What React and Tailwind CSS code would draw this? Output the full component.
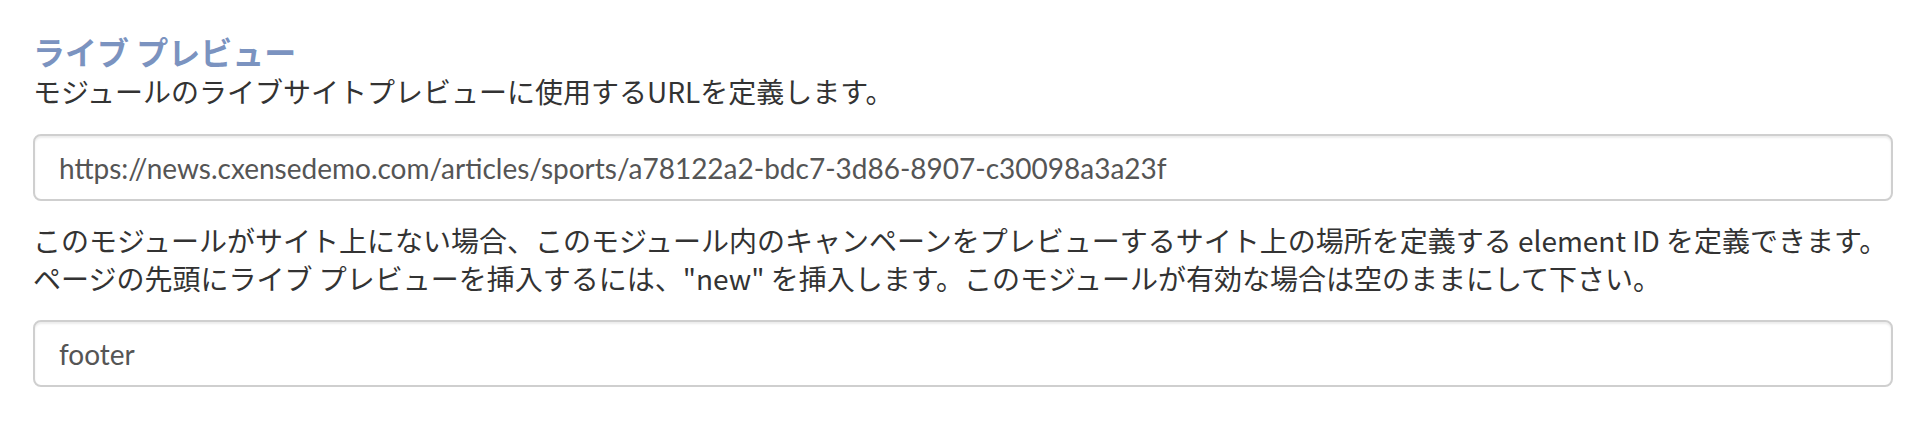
const jp = { fontFamily: '"Noto Sans CJK JP", "Noto Sans", sans-serif' };
const inputFont = { fontFamily: 'Lato, "Noto Sans", sans-serif' };

function TextField({ value }) {
  return (
    <input
      type="text"
      defaultValue={value}
      style={inputFont}
      className="w-full h-[67px] border-2 border-[#cfcfcf] rounded-[8px] bg-white px-[24px] text-[28px] text-[#555] shadow-[inset_0_2px_2px_rgba(0,0,0,0.075)] outline-none"
    />
  );
}

export default function App() {
  return (
    <div className="w-full h-[424px] bg-white px-[33px] pt-[31px]" style={jp}>
      <h2 className="text-[32px] leading-[41px] font-bold text-[#7b93c0]">ライブ プレビュー</h2>
      <p className="text-[28px] leading-[38px] text-[#333]">
        モジュールのライブサイトプレビューに使用するURLを定義します。
      </p>

      <div className="mt-[24px]">
        <TextField value="https://news.cxensedemo.com/articles/sports/a78122a2-bdc7-3d86-8907-c30098a3a23f" />
      </div>

      <p className="mt-[20px] text-[28px] leading-[38px] text-[#333]">
        <span className="block whitespace-nowrap">
          このモジュールがサイト上にない場合、このモジュール内のキャンペーンをプレビューするサイト上の場所を定義する element ID を定義できます。
        </span>
        <span className="block whitespace-nowrap">
          ページの先頭にライブ プレビューを挿入するには、"new" を挿入します。このモジュールが有効な場合は空のままにして下さい。
        </span>
      </p>

      <div className="mt-[23px]">
        <TextField value="footer" />
      </div>
    </div>
  );
}
